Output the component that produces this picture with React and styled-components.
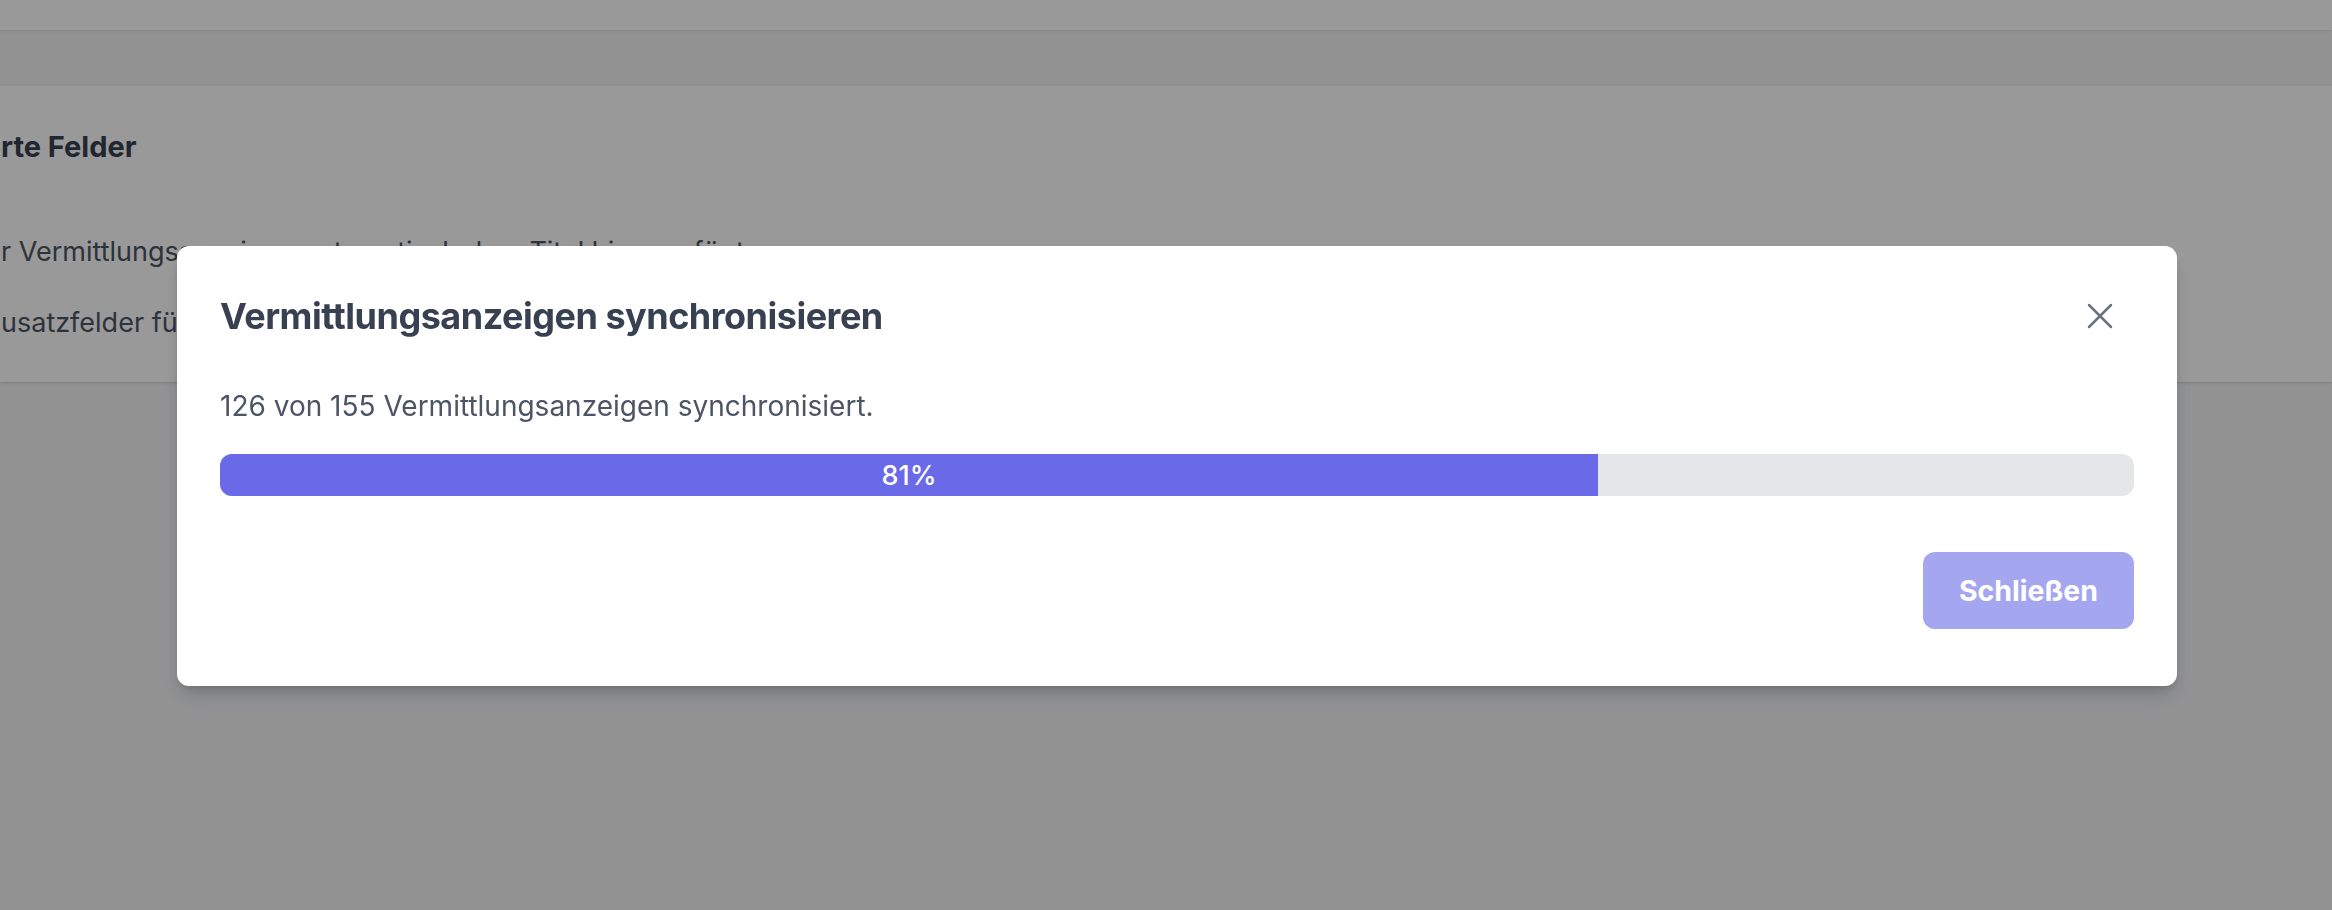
import React from "react";
import styled, { createGlobalStyle } from "styled-components";

const GlobalStyle = createGlobalStyle`
  html, body {
    margin: 0;
    padding: 0;
    background: #f3f4f6;
    font-family: Inter, "Noto Sans", "Liberation Sans", sans-serif;
  }
  * { box-sizing: border-box; }
`;

const Page = styled.div`
  width: 2332px;
  height: 910px;
  overflow: hidden;
  background: #f3f4f6;
  display: flex;
  flex-direction: column;
`;

const TopBar = styled.div`
  height: 30px;
  flex: none;
  background: #ffffff;
  box-shadow: 0 1px 3px rgba(0, 0, 0, 0.1);
  position: relative;
  z-index: 1;
`;

const Band = styled.div`
  height: 56px;
  flex: none;
`;

const Card = styled.section`
  height: 296px;
  flex: none;
  background: #ffffff;
  box-shadow: 0 1px 3px rgba(0, 0, 0, 0.1), 0 1px 2px rgba(0, 0, 0, 0.06);
  padding: 40px 0 0 1px;
  display: flex;
  flex-direction: column;
`;

const CardTitle = styled.h3`
  margin: 0;
  font-size: 29px;
  line-height: 42px;
  font-weight: 700;
  color: #374151;
  white-space: nowrap;
`;

const CardLine = styled.p`
  margin: ${(p) => p.$top}px 0 0;
  font-size: 27px;
  line-height: 40.5px;
  font-weight: 400;
  color: #4b5563;
  white-space: nowrap;
`;

const Overlay = styled.div`
  position: fixed;
  inset: 0;
  z-index: 50;
  background: rgba(0, 0, 0, 0.4);
  display: flex;
  align-items: center;
  justify-content: center;
  padding: 22px 0 0 22px;
`;

const Dialog = styled.div`
  width: 2000px;
  background: #ffffff;
  border-radius: 12px;
  box-shadow: 0 12px 20px -4px rgba(0, 0, 0, 0.18), 0 4px 8px -2px rgba(0, 0, 0, 0.12);
  padding: 43px 43px 57px 43px;
  display: flex;
  flex-direction: column;
`;

const Header = styled.div`
  display: flex;
  align-items: center;
  justify-content: space-between;
  height: 54px;
`;

const Title = styled.h2`
  margin: 0;
  font-size: 36px;
  line-height: 54px;
  font-weight: 700;
  color: #374151;
  letter-spacing: -0.5px;
`;

const CloseButton = styled.button`
  width: 44px;
  height: 44px;
  margin-right: 12px;
  padding: 0;
  border: 0;
  background: transparent;
  color: #6b7280;
  display: flex;
  align-items: center;
  justify-content: center;
  cursor: pointer;
  svg { display: block; }
`;

const Message = styled.p`
  margin: 43px 0 0;
  font-size: 28px;
  line-height: 40.5px;
  font-weight: 400;
  color: #4b5563;
`;

const Track = styled.div`
  margin-top: 27.5px;
  height: 42px;
  border-radius: 12px;
  background: #e5e6ea;
  overflow: hidden;
  display: flex;
`;

const Fill = styled.div`
  height: 100%;
  background: #6a6ae8;
  color: #ffffff;
  font-size: 27px;
  font-weight: 500;
  display: flex;
  align-items: center;
  justify-content: center;
`;

const Footer = styled.div`
  margin-top: 56px;
  display: flex;
  justify-content: flex-end;
`;

const PrimaryButton = styled.button`
  height: 77px;
  padding: 0 36px;
  border: 0;
  border-radius: 12px;
  background: #a5a6f0;
  color: #ffffff;
  font-family: inherit;
  font-size: 28.5px;
  font-weight: 700;
  cursor: pointer;
`;

export default function App() {
  const done = 126;
  const total = 155;
  const pct = Math.round((done / total) * 100);
  return (
    <>
      <GlobalStyle />
      <Page>
        <TopBar />
        <Band />
        <Card>
          <CardTitle>rte Felder</CardTitle>
          <CardLine $top={64}>r Vermittlungsanzeigen automatisch dem Titel hinzugefügt</CardLine>
          <CardLine $top={30}>usatzfelder für Vermittlungsanzeigen</CardLine>
        </Card>
      </Page>
      <Overlay>
        <Dialog role="dialog">
          <Header>
            <Title>Vermittlungsanzeigen synchronisieren</Title>
            <CloseButton aria-label="Schließen">
              <svg width="44" height="44" viewBox="0 0 24 24" fill="none" stroke="currentColor" strokeWidth="1.35" strokeLinecap="round">
                <path d="M6 6L18 18M18 6L6 18" />
              </svg>
            </CloseButton>
          </Header>
          <Message>
            {done} von {total} Vermittlungsanzeigen synchronisiert.
          </Message>
          <Track>
            <Fill style={{ width: "72%" }}>{pct}%</Fill>
          </Track>
          <Footer>
            <PrimaryButton>Schließen</PrimaryButton>
          </Footer>
        </Dialog>
      </Overlay>
    </>
  );
}
